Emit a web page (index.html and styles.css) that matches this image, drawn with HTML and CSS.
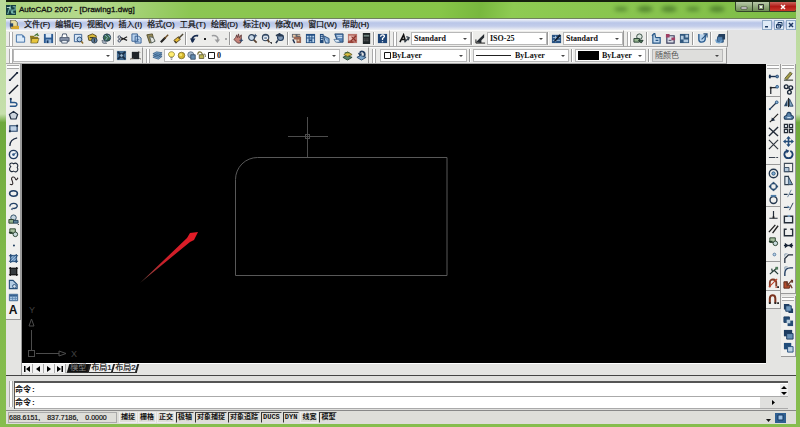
FILE: index.html
```html
<!DOCTYPE html>
<html lang="zh-CN">
<head>
<meta charset="utf-8">
<title>AutoCAD 2007 - [Drawing1.dwg]</title>
<link rel="stylesheet" href="styles.css">
</head>
<body>
<svg class="sprite" aria-hidden="true">
<defs>
<symbol id="new" viewBox="0 0 12 12"><path d="M1.5 2h6.500l2.500 2.500V10h-9z" fill="#dcebfa" stroke="#3c6ca3"/><path d="M8 2v3h3" fill="#3c6ca3"/></symbol>
<symbol id="open" viewBox="0 0 12 12"><path d="M1 3h4l1 1h4v7H2z" fill="#8f7a1c"/><path d="M3 6h8l-2 5H2z" fill="#e8c53c" stroke="#4b4a20" stroke-width=".6"/><path d="M6 3l3-2v1.500h2" fill="none" stroke="#3c6f2b" stroke-width="1.200"/></symbol>
<symbol id="save" viewBox="0 0 12 12"><path d="M1 1h10v10H1z" fill="#2b5a92"/><path d="M3 1h6v4H3z" fill="#dbe9f7"/><path d="M3 7h6v4H3z" fill="#8fb3d9"/><path d="M4 8h2v3H4z" fill="#17365f"/></symbol>
<symbol id="print" viewBox="0 0 12 12"><path d="M3 5l1-4h4l1 4" fill="#fff" stroke="#44546b"/><path d="M1 5h10v4H1z" fill="#8794ab" stroke="#33425a" stroke-width=".8"/><path d="M3 8h6v3H3z" fill="#e8eef5" stroke="#33425a" stroke-width=".8"/></symbol>
<symbol id="preview" viewBox="0 0 12 12"><path d="M1.500 1.500h8v8h-8z" fill="#d6e6f7" stroke="#355d8e"/><circle cx="7" cy="7" r="2.600" fill="#a9cbe9" stroke="#24436d"/><path d="M9 9l2 2.500" stroke="#8d6a25" stroke-width="1.500"/></symbol>
<symbol id="publish" viewBox="0 0 12 12"><path d="M1 3l5-2 4 2v5H2z" fill="#d7b83b" stroke="#57481a"/><circle cx="8" cy="8" r="3" fill="#5d7ea1" stroke="#2b3b4c"/><path d="M3 5h4M8 6v4" stroke="#2d2a1b"/></symbol>
<symbol id="globe" viewBox="0 0 12 12"><circle cx="6.500" cy="5" r="4" fill="#39684e" stroke="#1c3550"/><path d="M4 2l3 3-2 3M8 2l2 3" fill="none" stroke="#8cb6cf"/><path d="M1 8l4 1 1 3-4-1z" fill="#a8b5c4" stroke="#3a4757" stroke-width=".6"/></symbol>
<symbol id="cut" viewBox="0 0 12 12"><path d="M4 5l7 3M4 8l7-4" stroke="#222" stroke-width="1.300"/><circle cx="2.500" cy="4.500" r="1.400" fill="none" stroke="#33415c"/><circle cx="2.500" cy="8.500" r="1.400" fill="none" stroke="#33415c"/></symbol>
<symbol id="copyclip" viewBox="0 0 12 12"><path d="M1 1h6v8H1zM4.500 3.500h4l2.500 2V11H4.500z" fill="#b9d3ee" stroke="#345d8f"/><path d="M6 7h3M6 9h3" stroke="#345d8f" stroke-width=".7"/></symbol>
<symbol id="paste" viewBox="0 0 12 12"><path d="M2 2l6-1 2 8-5 2z" fill="#958956" stroke="#55502f"/><path d="M5 4l4 1 2 4-4 2z" fill="#e5e6e0" stroke="#56615d"/></symbol>
<symbol id="match" viewBox="0 0 12 12"><path d="M2 10l5-5" stroke="#222" stroke-width="2.400"/><path d="M6 6l4-4" stroke="#6e4f28" stroke-width="1.600"/></symbol>
<symbol id="brush" viewBox="0 0 12 12"><path d="M1 8l5-4 2 3-5 4z" fill="#e6ba36" stroke="#55451b"/><path d="M6 6l5-5M2 9l2 2" stroke="#4b4331" stroke-width="1.600"/></symbol>
<symbol id="undo" viewBox="0 0 12 12"><path d="M4 10C2 6 5 2 10 3" fill="none" stroke="#182c50" stroke-width="2"/><path d="M1 6h6L4 11z" fill="#182c50"/></symbol>
<symbol id="redo" viewBox="0 0 12 12"><path d="M2 3c5-1 8 2 6 6" fill="none" stroke="#9b9c9e" stroke-width="1.500"/><path d="M5 7h6l-3 4z" fill="#9b9c9e"/></symbol>
<symbol id="pan" viewBox="0 0 12 12"><path d="M3 5l1-3 1 3 1-4 1 4 2-3v5l-1 4H5L1 7z" fill="#c58279" stroke="#633c3c"/><path d="M7 8h4M9 6v4" stroke="#27456c"/></symbol>
<symbol id="zoomrt" viewBox="0 0 12 12"><circle cx="5" cy="5" r="3.200" fill="#c9d9e9" stroke="#33465e" stroke-width="1.300"/><path d="M7.500 7.500l3 3" stroke="#5b4331" stroke-width="2"/><path d="M9 1v4M7 3h4" stroke="#27456c"/></symbol>
<symbol id="zoomwin" viewBox="0 0 12 12"><circle cx="5" cy="5" r="3.500" fill="#738aa6" stroke="#33465e" stroke-width="1.200"/><path d="M3 4h4v3H3z" fill="none" stroke="#fff"/><path d="M7 7l2 3" stroke="#5b4331" stroke-width="2"/><path d="M9 10h3v2z" fill="#111"/></symbol>
<symbol id="zoomprev" viewBox="0 0 12 12"><circle cx="6" cy="5" r="3.200" fill="#8199b5" stroke="#263f60" stroke-width="1.300"/><path d="M3 8l-2 3M1 3l4-2v2h4" fill="none" stroke="#28394f" stroke-width="1.800"/></symbol>
<symbol id="props" viewBox="0 0 12 12"><path d="M1 1h9v4H1z" fill="#5d6571"/><path d="M3 4h8v7H6V7H3z" fill="#9b6754"/><path d="M2 2h3v2H2zM7 7h2v2H7zM7 2h3v1H7z" fill="#e9c7a5"/><path d="M2 7l2 4" stroke="#1c304f" stroke-width="1.500"/></symbol>
<symbol id="dc" viewBox="0 0 12 12"><path d="M1 1h10v10H1z" fill="#245084"/><path d="M2 3h2v2H2zM5 3h2v2H5zM8 3h2v2H8zM2 6h2v4H2zM5 6h2v1H5zM5 9h2v1H5zM8 6h2v4H8z" fill="#b8d3ec"/></symbol>
<symbol id="palette" viewBox="0 0 12 12"><path d="M1 1h4v10H1z" fill="#214a7b"/><path d="M5 3l6 3v5H7z" fill="#84aad2" stroke="#244b79"/><path d="M2 3h2M2 5h2M2 7h2M7 7l2 3" stroke="#d3e5f7"/></symbol>
<symbol id="sheet" viewBox="0 0 12 12"><path d="M2 1h9v9H5z" fill="#5b86b8" stroke="#20446f"/><path d="M4 3h6M5 5h5" stroke="#e0eef9"/><path d="M1 7h5l2 3H3z" fill="#dcecf9" stroke="#345b87" stroke-width=".7"/></symbol>
<symbol id="markup" viewBox="0 0 12 12"><path d="M1 1h10v10H1z" fill="#ba746b"/><path d="M2 3h5v5H2z" fill="#eac0b8"/><path d="M5 4l5 5M10 3L4 9M1 10h6" stroke="#8c3229" stroke-width="1.200"/></symbol>
<symbol id="calc" viewBox="0 0 12 12"><path d="M2 0h8v12H2z" fill="#202628"/><path d="M3 2h6v2H3z" fill="#6d817b"/><path d="M3 6h1v1H3zM5 6h1v1H5zM7 6h1v1H7zM3 8h1v1H3zM5 8h1v1H5zM7 8h1v1H7z" fill="#777"/></symbol>
<symbol id="help" viewBox="0 0 12 12"><path d="M1 1h10v10H1z" fill="#1f4678"/><path d="M4 4c0-3 5-2 4 0L6 6v1.500M6 9v1" fill="none" stroke="#fff" stroke-width="1.400"/></symbol>
<symbol id="textstyle" viewBox="0 0 12 12"><path d="M1 10L5 2l2 7M3 7h3" fill="none" stroke="#111" stroke-width="1.700"/><path d="M6 10l5-5M8 4l3 1-1 3" fill="none" stroke="#35404c" stroke-width="1.500"/></symbol>
<symbol id="dimstyle" viewBox="0 0 12 12"><path d="M1 10l4-4 5-5v4L7 8v3z" fill="#252b32"/><path d="M1 7v4h10" fill="none" stroke="#111"/></symbol>
<symbol id="tablestyle" viewBox="0 0 12 12"><path d="M1 2h10v9H1z" fill="#285384"/><path d="M2 5h8M2 8h8M5 3v7" stroke="#abc6e0"/><path d="M4 9l6-7" stroke="#111f31" stroke-width="2"/></symbol>
<symbol id="block1" viewBox="0 0 12 12"><circle cx="7" cy="4" r="3" fill="#d9e3dc" stroke="#30473c"/><path d="M1 6h6v4H1z" fill="#94b38c" stroke="#243b31"/><path d="M6 8h5l-2 3z" fill="#48704f" stroke="#243b31"/></symbol>
<symbol id="block2" viewBox="0 0 12 12"><path d="M2 2v9h8V5H5" fill="#bfd7ed" stroke="#275787" stroke-width="1.300"/><path d="M1 3l3-3 1 5M5 8h3" fill="none" stroke="#275787" stroke-width="1.300"/></symbol>
<symbol id="block3" viewBox="0 0 12 12"><path d="M2 3h8v8H2z" fill="#d7dce6" stroke="#3d405f" stroke-width="1.300"/><path d="M1 1h4v4H1zM7 5h4v3H7z" fill="#a13f63"/><path d="M4 8h3" stroke="#3d405f"/></symbol>
<symbol id="block4" viewBox="0 0 12 12"><path d="M1 1h10v10H1z" fill="#31587e"/><path d="M2 3h3v4H2zM7 2h3v3H7zM5 7h5v3H5z" fill="#b4cbe0"/></symbol>
<symbol id="refedit" viewBox="0 0 12 12"><path d="M2 1v6c0 4 6 4 7 0V2" fill="#b7d2eb" stroke="#2d5f92" stroke-width="1.500"/><path d="M5 7l6-6M7 1h4v4" fill="none" stroke="#28527e" stroke-width="1.200"/></symbol>
<symbol id="refedit2" viewBox="0 0 12 12"><path d="M3 4h6v6H2z" fill="#517fac" stroke="#234d78"/><path d="M4 1h7v6H8V4H3z" fill="#233f5e"/><path d="M1 7c0 4 5 5 6 1" fill="none" stroke="#72a3cf" stroke-width="1.500"/></symbol>
<symbol id="wsset" viewBox="0 0 12 12"><path d="M1 1h10v10H1z" fill="#456c91"/><path d="M2 2l8 8M10 2l-8 8" stroke="#172d46" stroke-width="2"/><circle cx="6" cy="6" r="2" fill="#9cb9d0" stroke="#172d46"/></symbol>
<symbol id="wsmine" viewBox="0 0 12 12"><path d="M2 2h8v8H2z" fill="#202427"/><path d="M0 10l4-1M9 1l2 2M10 9l2 1" stroke="#60594e"/></symbol>
<symbol id="layers" viewBox="0 0 12 12"><path d="M1 8l4-2 6 1-4 3zM1 6l4-2 6 1-4 3zM1 4l4-2 6 1-4 3z" fill="#7ba4c9" stroke="#315b83" stroke-width=".8"/></symbol>
<symbol id="bulb" viewBox="0 0 12 12"><path d="M4 8C0 4 3 1 6 1s6 3 2 7z" fill="#ffed71" stroke="#807628"/><path d="M4.500 9h3M5 11h2" stroke="#4e5154"/></symbol>
<symbol id="sun" viewBox="0 0 12 12"><circle cx="6" cy="6" r="4.400" fill="#d3b52b" stroke="#74652a"/><circle cx="5" cy="5" r="2" fill="#f5e267"/></symbol>
<symbol id="vpsun" viewBox="0 0 12 12"><circle cx="5" cy="5" r="4" fill="#a5b8cc" stroke="#4c6178"/><path d="M5 5h6v6H5z" fill="#648caf" stroke="#263e57"/></symbol>
<symbol id="lock" viewBox="0 0 12 12"><path d="M1 5c0-5 5-5 6-1v3" fill="none" stroke="#7b7337" stroke-width="1.500"/><path d="M3 5h6v5H3z" fill="#beb752" stroke="#56522b"/><path d="M9 4c3 0 3 2 2 4" fill="none" stroke="#56522b"/></symbol>
<symbol id="swatch" viewBox="0 0 12 12"><path d="M2 2h8v8H2z" fill="#fff" stroke="#111" stroke-width="1.300"/></symbol>
<symbol id="makelayer" viewBox="0 0 12 12"><path d="M1 8l4-2 6 2-5 3z" fill="#56816a" stroke="#234532"/><path d="M2 5l4-3 5 3-5 2z" fill="#dbc141" stroke="#6c6227"/><path d="M3 3h5" stroke="#315f42"/></symbol>
<symbol id="layerprev" viewBox="0 0 12 12"><path d="M1 8l4-2 6 2-5 3z" fill="#7ba4c9" stroke="#294a6c"/><path d="M9 7c2-5-3-7-5-4" fill="none" stroke="#203c61" stroke-width="2"/><path d="M2 3l5 1-3 3z" fill="#203c61"/></symbol>

<symbol id="line" viewBox="0 0 12 12"><path d="M2 10l8-8" stroke="#172238" stroke-width="1.500"/><path d="M1 9h2v2H1zM9 1h2v2H9z" fill="#172238"/></symbol>
<symbol id="xline" viewBox="0 0 12 12"><path d="M1 11L11 1" stroke="#111825" stroke-width="1.500"/></symbol>
<symbol id="pline" viewBox="0 0 12 12"><path d="M3 2v4h3c5-1 5 5 0 4H2" fill="none" stroke="#285789" stroke-width="1.600"/><path d="M2 1h2v2H2z" fill="#182a44"/></symbol>
<symbol id="polygon" viewBox="0 0 12 12"><path d="M6 1.500l4.500 3.300-1.700 5H3.200l-1.700-5z" fill="#cbd4dc" stroke="#1c2c40" stroke-width="1.300"/></symbol>
<symbol id="rectangle" viewBox="0 0 12 12"><path d="M2 3h8v6H2z" fill="#bfd2e6" stroke="#27456a" stroke-width="1.300"/><path d="M1 8h2v2H1zM9 2h2v2H9z" fill="#172a43"/></symbol>
<symbol id="arc" viewBox="0 0 12 12"><path d="M2 11C2 6 5 3 10 2" fill="none" stroke="#1c2a40" stroke-width="1.400"/></symbol>
<symbol id="circle" viewBox="0 0 12 12"><circle cx="6" cy="6" r="4.500" fill="#edf2f6" stroke="#1f3b60" stroke-width="1.600"/><circle cx="6" cy="6" r="1.500" fill="#335b89"/><path d="M6 6l3-2" stroke="#335b89"/></symbol>
<symbol id="cloud" viewBox="0 0 12 12"><path d="M3 5C0 2 4 0 6 2c3-2 6 1 4 4 2 3-1 6-4 4-3 2-6-2-3-5z" fill="none" stroke="#202b3a" stroke-width="1.200"/></symbol>
<symbol id="spline" viewBox="0 0 12 12"><path d="M2 10c5 2 3-3 2-5-1-3 3-4 4-1s2 0 3-1" fill="none" stroke="#302a2b" stroke-width="1.200"/></symbol>
<symbol id="ellipse" viewBox="0 0 12 12"><ellipse cx="6" cy="6" rx="4.200" ry="3" fill="none" stroke="#203f65" stroke-width="1.800"/></symbol>
<symbol id="elarc" viewBox="0 0 12 12"><path d="M2 6c0-5 9-4 8 0-1 3-4 2-5 2" fill="none" stroke="#203f65" stroke-width="1.500"/><path d="M5 7v3l-2-1z" fill="#203f65"/></symbol>
<symbol id="insert" viewBox="0 0 12 12"><circle cx="6" cy="4" r="3" fill="#c5d5df" stroke="#24445c"/><path d="M1 6h5v4H1z" fill="#91ae8b" stroke="#283d2c"/><path d="M6 7h5v3H6z" fill="#5b829b" stroke="#243f53"/><path d="M10 11h2v1z" fill="#111"/></symbol>
<symbol id="makeblock" viewBox="0 0 12 12"><path d="M2 2h6v5H2z" fill="#a9c1a0" stroke="#26402c"/><circle cx="8" cy="8" r="2.500" fill="#c8d9dc" stroke="#26402c"/><path d="M1 6h4" stroke="#26402c" stroke-width="1.500"/></symbol>
<symbol id="point" viewBox="0 0 12 12"><circle cx="6.500" cy="6" r="1.100" fill="#1f3e60"/></symbol>
<symbol id="hatch" viewBox="0 0 12 12"><path d="M2 2h8v8H2z" fill="#6a93bd"/><path d="M1 3h10M1 9h10M3 1v10M9 1v10" stroke="#1e446d" stroke-width="1.200"/><path d="M3 9l6-6M3 6l3-3M6 9l3-3" stroke="#abc9e6" stroke-width=".8"/></symbol>
<symbol id="gradient" viewBox="0 0 12 12"><path d="M2 2h8v8H2z" fill="#343a3d"/><path d="M1 2.500h10M1 9.500h10M2.500 1v10M9.500 1v10" stroke="#111" stroke-width="1.200"/></symbol>
<symbol id="region" viewBox="0 0 12 12"><path d="M1.500 1.500h4L10 6v4.500H1.500z" fill="#b3cce3" stroke="#274f79" stroke-width="1.200"/><circle cx="7" cy="8" r="2" fill="#d5e2ed" stroke="#274f79"/></symbol>
<symbol id="table" viewBox="0 0 12 12"><path d="M1.500 2.500h9v7h-9z" fill="#a8c7e5" stroke="#355f8c"/><path d="M2 4h8" stroke="#355f8c" stroke-width="2"/><path d="M2 7h8M5 4v5M8 4v5" stroke="#5883ae" stroke-width=".8"/></symbol>

<symbol id="track" viewBox="0 0 12 12"><path d="M1 6h9" stroke="#182f4e" stroke-width="1.500"/><path d="M1 4h2v4H1z" fill="#182f4e"/><circle cx="10" cy="6" r="1.500" fill="#6990b5" stroke="#23466e"/></symbol>
<symbol id="from" viewBox="0 0 12 12"><path d="M3 11V4h6" fill="none" stroke="#282c33" stroke-width="1.400"/><circle cx="10" cy="3" r="1.500" fill="#78a4cc" stroke="#315c88"/><path d="M2 3h2v2H2z" fill="#222"/></symbol>
<symbol id="endpt" viewBox="0 0 12 12"><path d="M2 10l7-7" stroke="#23344d" stroke-width="1.400"/><circle cx="9.500" cy="2.500" r="1.500" fill="#8db5d8" stroke="#29547f"/><path d="M1 9h2v2H1z" fill="#29547f"/></symbol>
<symbol id="midpt" viewBox="0 0 12 12"><path d="M2 10l9-9" stroke="#222" stroke-width="1.300"/><path d="M4 5l4 3-4 1z" fill="#17263b"/></symbol>
<symbol id="intersect" viewBox="0 0 12 12"><path d="M1 2l10 9M11 1L1 11" stroke="#222b38" stroke-width="1.500"/></symbol>
<symbol id="apparent" viewBox="0 0 12 12"><path d="M1 1l10 10M11 1L1 11" stroke="#30363e" stroke-width="1.300"/></symbol>
<symbol id="extension" viewBox="0 0 12 12"><path d="M1 6h7M9 6h2" stroke="#39424e" stroke-width="1.300"/></symbol>
<symbol id="center" viewBox="0 0 12 12"><circle cx="6" cy="6" r="4.600" fill="none" stroke="#23364d" stroke-width="1.500"/><circle cx="6" cy="6" r="1.800" fill="#83aed2" stroke="#27547e"/></symbol>
<symbol id="quadrant" viewBox="0 0 12 12"><circle cx="6" cy="6" r="3.300" fill="none" stroke="#294b70" stroke-width="1.200"/><path d="M6 1l1.500 2h-3zM6 11L4.500 9h3zM1 6l2-1.500v3zM11 6L9 4.500v3z" fill="#294b70" stroke="#294b70"/></symbol>
<symbol id="tangent" viewBox="0 0 12 12"><circle cx="6" cy="6.500" r="3.800" fill="none" stroke="#24374e" stroke-width="1.500"/><path d="M3 2h6" stroke="#4c7da9" stroke-width="2"/></symbol>
<symbol id="perp" viewBox="0 0 12 12"><path d="M1.500 9h9M6 1v8" stroke="#232d39" stroke-width="1.300"/><path d="M5 7h2v2H5z" fill="#222"/></symbol>
<symbol id="parallel" viewBox="0 0 12 12"><path d="M1 10l7-8M5 11l6-8" stroke="#222" stroke-width="1.500"/></symbol>
<symbol id="node" viewBox="0 0 12 12"><circle cx="7" cy="6" r="1.500" fill="#bcd5eb" stroke="#55799e"/></symbol>
<symbol id="nearest" viewBox="0 0 12 12"><path d="M2 10l8-7M7 6l4 4M4 4l1 4" fill="none" stroke="#243a35" stroke-width="1.300"/><path d="M8 2h3v3H8z" fill="#4f7b5a"/></symbol>
<symbol id="snapnone" viewBox="0 0 12 12"><path d="M2 10V5c0-5 7-4 7 0v4" fill="none" stroke="#823d28" stroke-width="2"/><path d="M1 10L10 1M8 10h2" stroke="#bd432a" stroke-width="1.200"/><path d="M10 9h2v2h-2z" fill="#222"/></symbol>
<symbol id="magnet" viewBox="0 0 12 12"><path d="M2 10V5c0-5 6-5 6 0v5" fill="none" stroke="#7c3420" stroke-width="2.200"/><path d="M1 9h2v2H1zM7 9h2v2H7zM10 9h2v2h-2z" fill="#222"/></symbol>

<symbol id="erase" viewBox="0 0 12 12"><path d="M2 8l6-7 2 2-6 7z" fill="#a29a47" stroke="#414323" stroke-width=".8"/><path d="M1 10h10" stroke="#596058" stroke-width="1.500"/></symbol>
<symbol id="copy" viewBox="0 0 12 12"><circle cx="3.500" cy="3" r="2" fill="none" stroke="#1c2939" stroke-width="1.500"/><circle cx="8.500" cy="4" r="2" fill="none" stroke="#1c2939" stroke-width="1.500"/><circle cx="7" cy="9" r="2" fill="none" stroke="#1c2939" stroke-width="1.500"/></symbol>
<symbol id="mirror" viewBox="0 0 12 12"><path d="M5 2v8H1z" fill="#294765"/><path d="M7 2v8h4z" fill="#83a6c4" stroke="#294765"/><path d="M6 1v10" stroke="#111"/></symbol>
<symbol id="offset" viewBox="0 0 12 12"><path d="M2 10c-2-3 1-4 2-4 0-5 5-4 5 0 3 0 3 3 1 4z" fill="#5c84aa" stroke="#203f60" stroke-width="1.200"/><path d="M4 9c0-2 5-2 5 0z" fill="#c7dbec"/></symbol>
<symbol id="array" viewBox="0 0 12 12"><path d="M1.500 1.500h3.500V5H1.500zM7 1.500h3.500V5H7zM1.500 7H5v3.500H1.500zM7 7h3.500v3.500H7z" fill="#dce5ec" stroke="#252c35" stroke-width="1.300"/></symbol>
<symbol id="move" viewBox="0 0 12 12"><path d="M6 2v8M2 6h8" stroke="#254d7a" stroke-width="1.700"/><path d="M6 0l2.500 3h-5zM6 12L3.500 9h5zM0 6l3-2.500v5zM12 6L9 3.500v5z" fill="#254d7a"/></symbol>
<symbol id="rotate" viewBox="0 0 12 12"><path d="M4 2C0 4 1 10 6 10s6-6 2-8" fill="none" stroke="#1e426f" stroke-width="2"/><path d="M3 0l4 2-3 3z" fill="#1e426f"/></symbol>
<symbol id="scale" viewBox="0 0 12 12"><path d="M1.500 1.500h9v9h-9z" fill="none" stroke="#414c58" stroke-width="1.200"/><path d="M1.500 6h5v4.500h-5z" fill="#b3c7da" stroke="#34495f"/></symbol>
<symbol id="stretch" viewBox="0 0 12 12"><path d="M2 1.500h4v9H2z" fill="#dce6ef" stroke="#2d3d4d" stroke-width="1.200"/><path d="M6 2l4.500 8.500H6" fill="#799bbb" stroke="#2d3d4d"/></symbol>
<symbol id="trim" viewBox="0 0 12 12"><path d="M1 7h4M7 7h4" stroke="#26384e" stroke-width="1.300"/><path d="M5 10l4-8" stroke="#67819b"/></symbol>
<symbol id="extend" viewBox="0 0 12 12"><path d="M1 7h5" stroke="#26384e" stroke-width="1.300"/><path d="M7 10l4-8" stroke="#26384e"/><path d="M5 5l3 2-3 1z" fill="#547da5"/></symbol>
<symbol id="breakpt" viewBox="0 0 12 12"><path d="M1.500 2.500h9v7h-9z" fill="#e9eef2" stroke="#242d38" stroke-width="1.500"/><path d="M5 1h3v2H5z" fill="#81a6c7"/></symbol>
<symbol id="break" viewBox="0 0 12 12"><path d="M4 2.500H1.500v7h9v-7H8" fill="none" stroke="#242d38" stroke-width="1.500"/></symbol>
<symbol id="join" viewBox="0 0 12 12"><path d="M1 6h10" stroke="#172334" stroke-width="1.500"/><path d="M2 3l4 3-4 3zM10 3L6 6l4 3z" fill="#172334"/></symbol>
<symbol id="chamfer" viewBox="0 0 12 12"><path d="M2 11V6l4-4h5" fill="none" stroke="#26313f" stroke-width="1.400"/><path d="M2 4V1h3" fill="none" stroke="#7e95ab"/></symbol>
<symbol id="fillet" viewBox="0 0 12 12"><path d="M2 11V8c0-4 2-6 6-6h3" fill="none" stroke="#203c60" stroke-width="1.500"/><path d="M2 4V1h3" fill="none" stroke="#7e95ab"/></symbol>
<symbol id="explode" viewBox="0 0 12 12"><path d="M1 3h4l-1 3 4 1-1 3H1z" fill="#b34c2c" stroke="#57281d"/><path d="M4 8l6-7M3 3l3 3M8 6l2 4" stroke="#6d3a28" stroke-width="1.400"/><path d="M9 1h2v3H9z" fill="#63342a"/></symbol>
<symbol id="order1" viewBox="0 0 12 12"><path d="M1 1h6v6H1zM6 6h5v5H6z" fill="#1d3c61"/><path d="M3 3h6v6H3z" fill="#6e98bd" stroke="#1d3c61"/></symbol>
<symbol id="order2" viewBox="0 0 12 12"><path d="M1 1h6v6H1z" fill="#264d76" stroke="#1d3c61"/><path d="M5 5h6v6H5z" fill="#264d76"/><path d="M4 4h4v4H4z" fill="#b8cedf"/></symbol>
<symbol id="order3" viewBox="0 0 12 12"><path d="M1 1h9v7H1z" fill="#1d3c61"/><path d="M4 5h7v6H4z" fill="#668eb4" stroke="#1d3c61"/></symbol>
<symbol id="order4" viewBox="0 0 12 12"><path d="M1 1h8v7H1z" fill="#214d7b"/><path d="M5 5h6v6H5z" fill="#bad0e4" stroke="#214d7b"/></symbol>
</defs>
</svg>

<div class="window">
  <header class="titlebar">
    <svg class="app-icon" viewBox="0 0 12 12"><path d="M0 0h12v12H0z" fill="#163f43"/><path d="M2 11L5 2l2 8M8 2h3v4H8v4h3" fill="none" stroke="#79b7ae" stroke-width="1.300"/><path d="M1 3h4" stroke="#d4eee3"/></svg>
    <h1>AutoCAD 2007 - [Drawing1.dwg]</h1>
    <svg class="glass" aria-hidden="true"><g fill="#315e1c"><ellipse cx="10" cy="4" rx="7" ry="2"/><ellipse cx="34" cy="4" rx="8" ry="3"/><ellipse cx="58" cy="4" rx="8" ry="3"/><ellipse cx="82" cy="4" rx="7" ry="2"/><ellipse cx="106" cy="4" rx="8" ry="3"/></g></svg>
    <div class="winbuttons">
      <button aria-label="Minimize"><svg viewBox="0 0 12 8"><path d="M3 4h6v2H3z" fill="#eee" stroke="#333" stroke-width=".6"/></svg></button>
      <button aria-label="Maximize"><svg viewBox="0 0 12 8"><path d="M3.500 1.500h5v5h-5z" fill="none" stroke="#333"/><path d="M5 3h2v2H5z" fill="#eee"/></svg></button>
      <button class="close" aria-label="Close"><svg viewBox="0 0 12 8"><path d="M4 2l4 4M8 2L4 6" stroke="#fff" stroke-width="1.500"/></svg></button>
    </div>
  </header>

  <nav class="menubar">
    <svg class="doc-icon" viewBox="0 0 12 12"><path d="M2 0h5l3 3v7H2z" fill="#e8dca0" stroke="#54564c"/><path d="M3 7h9v4H3z" fill="#d9a92f"/><path d="M1 4h4v4H1z" fill="#29466b"/></svg>
    <button>文件(F)</button><button>编辑(E)</button><button>视图(V)</button><button>插入(I)</button><button>格式(O)</button><button>工具(T)</button><button>绘图(D)</button><button>标注(N)</button><button>修改(M)</button><button>窗口(W)</button><button>帮助(H)</button>
    <div class="docbuttons">
      <button aria-label="Minimize drawing"><svg viewBox="0 0 8 8"><path d="M2 5h3v1.500H2z" fill="#1d3963"/></svg></button>
      <button aria-label="Restore drawing"><svg viewBox="0 0 8 8"><path d="M3 1.500h4V5H3zM1.500 3.500h4V7h-4z" fill="#c7d9ed" stroke="#1d3963"/></svg></button>
      <button aria-label="Close drawing"><svg viewBox="0 0 8 8"><path d="M2 2l4 4M6 2L2 6" stroke="#1d3963" stroke-width="1.500"/></svg></button>
    </div>
  </nav>

  <div class="toolrow">
    <div class="toolbar">
      <i class="grip"></i>
      <button class="tool" aria-label="New"><svg><use href="#new"/></svg></button><button class="tool" aria-label="Open"><svg><use href="#open"/></svg></button><button class="tool" aria-label="Save"><svg><use href="#save"/></svg></button>
      <i class="sep"></i>
      <button class="tool" aria-label="Plot"><svg><use href="#print"/></svg></button><button class="tool" aria-label="Preview"><svg><use href="#preview"/></svg></button><button class="tool" aria-label="Publish"><svg><use href="#publish"/></svg></button><button class="tool" aria-label="3D DWF"><svg><use href="#globe"/></svg></button>
      <i class="sep"></i>
      <button class="tool" aria-label="Cut"><svg><use href="#cut"/></svg></button><button class="tool" aria-label="Copy"><svg><use href="#copyclip"/></svg></button><button class="tool" aria-label="Paste"><svg><use href="#paste"/></svg></button><button class="tool" aria-label="Match"><svg><use href="#match"/></svg></button><button class="tool" aria-label="Block editor"><svg><use href="#brush"/></svg></button>
      <i class="sep"></i>
      <button class="tool" aria-label="Undo"><svg><use href="#undo"/></svg></button><button class="more" aria-label="Undo list"></button><button class="tool" aria-label="Redo"><svg><use href="#redo"/></svg></button><button class="more dim" aria-label="Redo list"></button>
      <i class="sep"></i>
      <button class="tool" aria-label="Pan"><svg><use href="#pan"/></svg></button><button class="tool" aria-label="Zoom"><svg><use href="#zoomrt"/></svg></button><button class="tool" aria-label="Zoom window"><svg><use href="#zoomwin"/></svg></button><button class="tool" aria-label="Zoom previous"><svg><use href="#zoomprev"/></svg></button>
      <i class="sep"></i>
      <button class="tool" aria-label="Properties"><svg><use href="#props"/></svg></button><button class="tool" aria-label="DesignCenter"><svg><use href="#dc"/></svg></button><button class="tool" aria-label="Tool palettes"><svg><use href="#palette"/></svg></button><button class="tool" aria-label="Sheet set"><svg><use href="#sheet"/></svg></button><button class="tool" aria-label="Markup"><svg><use href="#markup"/></svg></button><button class="tool" aria-label="Calculator"><svg><use href="#calc"/></svg></button>
      <i class="sep"></i>
      <button class="tool" aria-label="Help"><svg><use href="#help"/></svg></button>
    </div>
    <div class="toolbar">
      <i class="grip"></i>
      <button class="tool" aria-label="Text style"><svg><use href="#textstyle"/></svg></button>
      <label class="combo w60"><select aria-label="Text style name"><option>Standard</option></select></label>
      <i class="sep"></i>
      <button class="tool" aria-label="Dimension style"><svg><use href="#dimstyle"/></svg></button>
      <label class="combo w60"><select aria-label="Dimension style name"><option>ISO-25</option></select></label>
      <i class="sep"></i>
      <button class="tool" aria-label="Table style"><svg><use href="#tablestyle"/></svg></button>
      <label class="combo w60"><select aria-label="Table style name"><option>Standard</option></select></label>
    </div>
    <div class="toolbar spaced">
      <i class="grip"></i>
      <button class="tool" aria-label="Insert block"><svg><use href="#block1"/></svg></button>
      <i class="sep"></i>
      <button class="tool" aria-label="Attach xref"><svg><use href="#block2"/></svg></button><button class="tool" aria-label="Attach image"><svg><use href="#block3"/></svg></button><button class="tool" aria-label="Import"><svg><use href="#block4"/></svg></button>
      <i class="sep"></i>
      <button class="tool" aria-label="Edit reference"><svg><use href="#refedit"/></svg></button>
      <i class="sep"></i>
      <button class="tool" aria-label="Save reference"><svg><use href="#refedit2"/></svg></button>
    </div>
  </div>

  <div class="toolrow">
    <div class="toolbar">
      <i class="grip"></i>
      <label class="combo w100"><select aria-label="Workspace"><option></option></select></label>
      <button class="tool" aria-label="Workspace settings"><svg><use href="#wsset"/></svg></button><button class="tool" aria-label="My workspace"><svg><use href="#wsmine"/></svg></button>
    </div>
    <div class="toolbar">
      <i class="grip"></i>
      <button class="tool" aria-label="Layers"><svg><use href="#layers"/></svg></button>
      <label class="combo w176 layer"><svg><use href="#bulb"/></svg><svg><use href="#sun"/></svg><svg><use href="#vpsun"/></svg><svg><use href="#lock"/></svg><svg><use href="#swatch"/></svg><select aria-label="Layer"><option>0</option></select></label>
      <button class="tool" aria-label="Make layer current"><svg><use href="#makelayer"/></svg></button><button class="tool" aria-label="Layer previous"><svg><use href="#layerprev"/></svg></button>
    </div>
    <div class="toolbar wide">
      <i class="grip"></i>
      <label class="combo w86"><svg><use href="#swatch"/></svg><select aria-label="Color"><option>ByLayer</option></select></label>
      <i class="sep"></i>
      <label class="combo w94"><span class="linetype"></span><select aria-label="Linetype"><option>ByLayer</option></select></label>
      <i class="sep"></i>
      <label class="combo w72"><span class="weight"></span><select aria-label="Lineweight"><option>ByLayer</option></select></label>
      <i class="sep"></i>
      <label class="combo w72 off"><select aria-label="Plot style" disabled><option>随颜色</option></select></label>
    </div>
  </div>

  <main class="work">
    <aside class="dock">
      <div class="column">
        <i class="hgrip"></i>
        <button aria-label="Line"><svg><use href="#line"/></svg></button><button aria-label="Construction line"><svg><use href="#xline"/></svg></button><button aria-label="Polyline"><svg><use href="#pline"/></svg></button><button aria-label="Polygon"><svg><use href="#polygon"/></svg></button><button aria-label="Rectangle"><svg><use href="#rectangle"/></svg></button><button aria-label="Arc"><svg><use href="#arc"/></svg></button><button aria-label="Circle"><svg><use href="#circle"/></svg></button><button aria-label="Revision cloud"><svg><use href="#cloud"/></svg></button><button aria-label="Spline"><svg><use href="#spline"/></svg></button><button aria-label="Ellipse"><svg><use href="#ellipse"/></svg></button><button aria-label="Ellipse arc"><svg><use href="#elarc"/></svg></button><button aria-label="Insert block"><svg><use href="#insert"/></svg></button><button aria-label="Make block"><svg><use href="#makeblock"/></svg></button><button aria-label="Point"><svg><use href="#point"/></svg></button><button aria-label="Hatch"><svg><use href="#hatch"/></svg></button><button aria-label="Gradient"><svg><use href="#gradient"/></svg></button><button aria-label="Region"><svg><use href="#region"/></svg></button><button aria-label="Table"><svg><use href="#table"/></svg></button><button class="letter">A</button>
      </div>
    </aside>

    <section class="document">
      <svg class="canvas" role="img" aria-label="Drawing">
        <g fill="none" stroke="#4c4c4c" shape-rendering="crispEdges">
          <path d="M265.500 72.500h40M285.500 52.500v40"/><path d="M283.500 70.500h4v4h-4z"/>
          <path d="M9.500 285.500v-20M13.500 289.500h23M6.500 286.500h6v6h-6z"/>
        </g>
        <path d="M235.500 93.500h189.500v118H213.500v-96a22 22 0 0 1 22-22z" fill="none" stroke="#585858"/>
        <path d="M9.500 255l-2.500 7h5zM44 289.500l-7-2.500v5z" fill="none" stroke="#4c4c4c"/>
        <text x="7" y="249">Y</text><text x="49" y="293">X</text>
        <path d="M118 219l47-45 3-5 8-1-4 8-4 2z" fill="url(#red)"/>
        <defs><linearGradient id="red" x1="0" y1="1" x2="1" y2="0"><stop offset="0" stop-color="#6b4a40"/><stop offset=".4" stop-color="#c8202a"/><stop offset="1" stop-color="#e61b26"/></linearGradient></defs>
      </svg>
      <div class="tabs">
        <button class="nav" aria-label="First"><svg viewBox="0 0 10 8"><path d="M2 1h1.500v6H2zM8 1v6L4 4z"/></svg></button><button class="nav" aria-label="Previous"><svg viewBox="0 0 10 8"><path d="M7 1v6L3 4z"/></svg></button><button class="nav" aria-label="Next"><svg viewBox="0 0 10 8"><path d="M3 1v6l4-3z"/></svg></button><button class="nav" aria-label="Last"><svg viewBox="0 0 10 8"><path d="M2 1v6l4-3zM6.500 1H8v6H6.500z"/></svg></button>
        <button class="tab active"><span>模型</span></button><button class="tab"><span>布局1</span></button><button class="tab"><span>布局2</span></button>
      </div>
    </section>

    <aside class="dock right">
      <div class="column">
        <i class="hgrip"></i>
        <button aria-label="Tracking"><svg><use href="#track"/></svg></button><button aria-label="From"><svg><use href="#from"/></svg></button>
        <i class="hsep"></i>
        <button aria-label="Endpoint"><svg><use href="#endpt"/></svg></button><button aria-label="Midpoint"><svg><use href="#midpt"/></svg></button><button aria-label="Intersection"><svg><use href="#intersect"/></svg></button><button aria-label="Apparent intersection"><svg><use href="#apparent"/></svg></button><button aria-label="Extension"><svg><use href="#extension"/></svg></button>
        <i class="hsep"></i>
        <button aria-label="Center"><svg><use href="#center"/></svg></button><button aria-label="Quadrant"><svg><use href="#quadrant"/></svg></button><button aria-label="Tangent"><svg><use href="#tangent"/></svg></button>
        <i class="hsep"></i>
        <button aria-label="Perpendicular"><svg><use href="#perp"/></svg></button><button aria-label="Parallel"><svg><use href="#parallel"/></svg></button><button aria-label="Insertion"><svg><use href="#makeblock"/></svg></button><button aria-label="Node"><svg><use href="#node"/></svg></button>
        <i class="hsep"></i>
        <button aria-label="Nearest"><svg><use href="#nearest"/></svg></button><button aria-label="No snap"><svg><use href="#snapnone"/></svg></button>
        <i class="hsep"></i>
        <button aria-label="Snap settings"><svg><use href="#magnet"/></svg></button>
      </div>
      <div class="stack">
        <div class="column">
          <i class="hgrip"></i>
          <button aria-label="Erase"><svg><use href="#erase"/></svg></button><button aria-label="Copy object"><svg><use href="#copy"/></svg></button><button aria-label="Mirror"><svg><use href="#mirror"/></svg></button><button aria-label="Offset"><svg><use href="#offset"/></svg></button><button aria-label="Array"><svg><use href="#array"/></svg></button><button aria-label="Move"><svg><use href="#move"/></svg></button><button aria-label="Rotate"><svg><use href="#rotate"/></svg></button><button aria-label="Scale"><svg><use href="#scale"/></svg></button><button aria-label="Stretch"><svg><use href="#stretch"/></svg></button><button aria-label="Trim"><svg><use href="#trim"/></svg></button><button aria-label="Extend"><svg><use href="#extend"/></svg></button><button aria-label="Break at point"><svg><use href="#breakpt"/></svg></button><button aria-label="Break"><svg><use href="#break"/></svg></button><button aria-label="Join"><svg><use href="#join"/></svg></button><button aria-label="Chamfer"><svg><use href="#chamfer"/></svg></button><button aria-label="Fillet"><svg><use href="#fillet"/></svg></button><button aria-label="Explode"><svg><use href="#explode"/></svg></button>
        </div>
        <div class="column">
          <i class="hgrip"></i>
          <button aria-label="Bring to front"><svg><use href="#order1"/></svg></button><button aria-label="Send to back"><svg><use href="#order2"/></svg></button><button aria-label="Bring above"><svg><use href="#order3"/></svg></button><button aria-label="Send under"><svg><use href="#order4"/></svg></button>
        </div>
      </div>
    </aside>
  </main>

  <section class="command">
    <i class="grip"></i>
    <div class="lines">
      <div class="history"><output>命令:</output><svg class="spin" viewBox="0 0 8 12"><path d="M1 5l3-3 3 3zM1 8l3 3 3-3z"/></svg></div>
      <div class="prompt"><label for="cmd">命令:</label><input id="cmd" type="text"><svg class="hscroll" viewBox="0 0 28 11"><path d="M12 3l3 2.500L12 8z"/></svg></div>
    </div>
  </section>

  <footer class="status">
    <output class="coords"><span>688.6151,</span><span>837.7186,</span><span>0.0000</span></output>
    <button>捕捉</button><button>栅格</button><button>正交</button><button class="on">极轴</button><button class="on">对象捕捉</button><button class="on">对象追踪</button><button class="on">DUCS</button><button class="on">DYN</button><button>线宽</button><button class="on">模型</button>
    <svg class="tray" viewBox="0 0 24 12"><path d="M2 7h5l-2.500 3z" fill="#111"/><path d="M11 1h11v10H11z" fill="#2f5f91"/><path d="M14 3h5v5h-5z" fill="#9fc3e6" stroke="#183a62"/></svg>
  </footer>
</div>
</body>
</html>
```
FILE: styles.css
```css
* { box-sizing: border-box; }
html, body { height: 100%; }
body {
  margin: 0;
  font: 8px/10px "Liberation Sans", "Noto Sans CJK SC", sans-serif;
  color: #111;
  background: #000;
}
button, select, input { font: inherit; color: inherit; margin: 0; padding: 0; border: 0; background: none; }
svg { display: block; flex: none; }
.sprite { position: absolute; width: 0; height: 0; }

.window {
  display: flex;
  flex-direction: column;
  height: 100vh;
  overflow: hidden;
  border: solid #86bd4e;
  border-width: 0 4px 3px 6px;
  border-image: linear-gradient(#b9d99a, #c5dfab 27%, #6ea83c 29%, #7fb84a 60%, #86bd4e) 1;
}

.titlebar {
  display: flex;
  align-items: center;
  height: 19px;
  margin: 0 -4px 0 -6px;
  padding-left: 6px;
  border-top: 2px solid #15200e;
  border-bottom: 1px solid #70805f;
  background: linear-gradient(100deg, #a9d37b, #b5da8e 12%, #8cc653 24%, #87c648 55%, #78b83e 60%, #8ecb52 64%, #88c44e 80%, #7dbc45);
}
.titlebar h1 { margin: 0 auto 0 3px; font: 8px/12px "Liberation Sans", sans-serif; -webkit-text-stroke: 0.3px #111; }
.app-icon { width: 10px; height: 10px; }
.glass { width: 124px; height: 10px; filter: blur(2px); opacity: 0.6; }
.winbuttons { display: flex; align-self: flex-start; margin-right: 3px; border: 1px solid #33452a; border-top: 0; border-radius: 0 0 3px 3px; overflow: hidden; }
.winbuttons button { width: 17px; height: 9px; border-right: 1px solid #33452a; background: linear-gradient(#b7c9a8, #6d8d54); }
.winbuttons .close { width: 26px; border: 0; background: linear-gradient(#c9665c, #b01a16 50%, #c8382a); }
.winbuttons svg { width: 12px; height: 8px; margin: auto; }

.menubar {
  display: flex;
  align-items: center;
  height: 11px;
  padding-left: 3px;
  background: linear-gradient(#f4f7fb, #b9c6e8 35%, #c3cdea 65%, #eef0f4);
}
.menubar > button { padding-right: 5px; white-space: nowrap; -webkit-text-stroke: 0.2px #111; }
.doc-icon { width: 10px; height: 10px; margin-right: 5px; }
.docbuttons { display: flex; gap: 2px; margin-left: auto; }
.docbuttons button { width: 10px; height: 10px; border: 1px solid #8fa9c6; background: #dfeaf6; }
.docbuttons svg { width: 8px; height: 8px; }

.toolrow { display: flex; height: 17px; background: #e3e3e3; }
.toolbar {
  display: flex;
  align-items: center;
  padding-left: 3px;
  border: solid #fafafa;
  border-width: 1px 0 0;
  border-right: 1px solid #999;
  border-bottom: 1px solid #aaa;
  background: #ececea;
}
.grip { flex: none; width: 4px; height: 14px; border: solid #aaa; border-width: 0 1px; background: #fff; }
.sep { flex: none; width: 2px; height: 13px; border-left: 1px solid #999; background: #fff; }
.spaced .sep { margin: 0 1px; }
.wide { padding-right: 3px; }
.wide .sep { margin: 0 2px; }
.wide .grip { margin-right: 4px; }
.tool { display: flex; flex: none; align-items: center; justify-content: center; width: 14px; height: 15px; }
.tool svg { width: 11px; height: 11px; }
.more { width: 7px; height: 14px; }
.more::after { content: ""; display: block; width: 2px; height: 2px; margin: auto; background: #222; }
.more.dim::after { background: #aaa; }

.combo {
  display: flex;
  align-items: center;
  height: 13px;
  padding: 0 3px 0 2px;
  border: 1px solid #b8b8b8;
  background: #fff;
  font: bold 8px/10px "Liberation Serif", "Noto Sans CJK SC", serif;
}
.combo::after { content: ""; flex: none; border: solid transparent; border-width: 2px 2px 0; border-top-color: #444; }
.combo select { flex: 1; min-width: 0; appearance: none; outline: 0; color: #111; }
.combo svg { width: 9px; height: 9px; }
.combo.off { background: #dededc; font-weight: normal; }
.combo.off select { opacity: 1; color: #555; }
.layer { gap: 1px; }
.w60 { width: 60px; }
.w72 { width: 71px; }
.w86 { width: 87px; }
.w94 { width: 96px; }
.w100 { width: 101px; }
.w176 { width: 176px; }
.linetype { width: 35px; margin-right: 4px; border-top: 1px solid #222; }
.weight { width: 21px; height: 9px; margin-right: 3px; background: #000; }

.work { display: flex; flex: 1; min-height: 0; background: #e4e4e2; }
.dock { display: flex; align-items: flex-start; border-right: 1px solid #999; }
.dock.right { border: 0; }
.column {
  display: flex;
  flex-direction: column;
  width: 15px;
  padding-bottom: 2px;
  border: solid #999;
  border-width: 0 1px 1px 0;
  background: #f0f0ee;
}
.column button { display: flex; align-items: center; justify-content: center; width: 14px; height: 13px; }
.column svg { width: 11px; height: 11px; }
.column .letter { font: bold 12px/13px "Liberation Sans", sans-serif; }
.hgrip { height: 4px; margin: 1px; border: solid #aaa; border-width: 1px 0; background: #fff; }
.hsep { height: 3px; border-top: 1px solid #999; }
.stack { display: flex; flex-direction: column; gap: 2px; }

.document { display: flex; flex: 1; flex-direction: column; min-width: 0; }
.canvas { flex: 1; width: 100%; min-height: 0; background: #000; }
.canvas text { font: 9px "Liberation Sans", sans-serif; fill: #404040; }
.tabs { display: flex; height: 12px; padding-bottom: 2px; border-top: 1px solid #fff; }
.nav { width: 11px; height: 9px; border-right: 1px solid #aaa; background: #f2f2f2; }
.nav svg { width: 10px; height: 8px; }
.tab { height: 9px; padding: 0 1px; border-bottom: 1px solid #333; border-right: 2px solid #222; background: #eee; line-height: 8px; transform: skewX(-16deg); -webkit-text-stroke: 0.2px #111; }
.tab span { display: block; transform: skewX(16deg); }
.tab.active { margin-left: 2px; padding: 0 2px; background: #111; color: #aaa; }

.command { display: flex; gap: 1px; height: 35px; padding: 5px 8px 1px 3px; border-top: 1px solid #444; background: #e0e0de; }
.command .grip { height: 26px; }
.lines { flex: 1; border-top: 2px solid #555; border-left: 1px solid #555; font-family: "Liberation Mono", "Noto Sans CJK SC", monospace; font-weight: bold; }
.history, .prompt { display: flex; align-items: center; justify-content: space-between; height: 14px; background: #fff; border-bottom: 1px solid #aaa; }
.prompt { height: 12px; }
.prompt input { flex: 1; min-width: 0; outline: 0; }
.spin { width: 8px; height: 12px; background: #eee; }
.hscroll { width: 28px; height: 11px; background: #e0e0de; }

.status { display: flex; align-items: center; height: 14px; padding: 0 8px 0 2px; border-top: 1px solid #888; background: #deded9; font-size: 7px; font-weight: bold; }
.coords { display: flex; gap: 7px; width: 109px; height: 11px; margin-right: 2px; border: 1px solid #aaa; font-weight: normal; -webkit-text-stroke: 0.2px #111; line-height: 9px; overflow: hidden; }
.status button { height: 11px; padding: 0 1px; border: 1px solid #eee; margin-right: 1px; font-family: "Liberation Mono", "Noto Sans CJK SC", monospace; line-height: 9px; white-space: nowrap; }
.status .on { border-color: #444 #ddd #ddd #333; }
.tray { width: 24px; height: 12px; margin-left: auto; }
```
